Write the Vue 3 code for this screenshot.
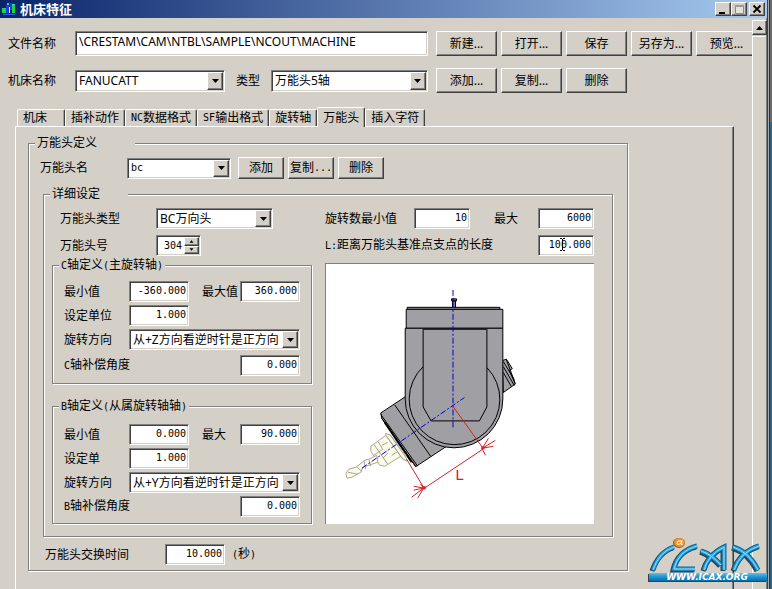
<script setup>
import { ref, reactive } from 'vue'

const fileName = ref('\\CRESTAM\\CAM\\NTBL\\SAMPLE\\NCOUT\\MACHINE')
const fileActions = ['新建...', '打开...', '保存', '另存为...', '预览...']
const machineActions = ['添加...', '复制...', '删除']

const tabs = [
  { latin: '', text: '机床' },
  { latin: '', text: '插补动作' },
  { latin: 'NC', text: '数据格式' },
  { latin: 'SF', text: '输出格式' },
  { latin: '', text: '旋转轴' },
  { latin: '', text: '万能头' },
  { latin: '', text: '插入字符' }
]
const activeTab = ref(5)

const head = reactive({
  number: '304',
  speedMin: '10',
  speedMax: '6000',
  length: '100.000',
  changeTime: '10.000'
})

const axes = reactive([
  {
    id: 'C', title: '轴定义', note: '主旋转轴',
    maxLabel: '最大值', unitLabel: '设定单位',
    min: '-360.000', max: '360.000', unit: '1.000',
    direction: '从+Z方向看逆时针是正方向', offset: '0.000'
  },
  {
    id: 'B', title: '轴定义', note: '从属旋转轴轴',
    maxLabel: '最大', unitLabel: '设定单',
    min: '0.000', max: '90.000', unit: '1.000',
    direction: '从+Y方向看逆时针是正方向', offset: '0.000'
  }
])
</script>

<template>
  <div class="desktop">
    <div class="window">
      <header class="titlebar">
        <svg class="app-icon" viewBox="0 0 14 14" aria-hidden="true">
          <path d="M0 6h4v5H0zM10 4h3v7h-3z" fill="#18d838" />
          <path d="M4 3h3v8H4zM8 1h2v7H8z" fill="#2038e8" />
          <path d="M5 1h2v2H5zM10 2h3v2h-3z" fill="#30c8b0" />
          <path d="M7 5h1v6H7z" fill="#e8f0ff" />
          <path d="M1 12.500h12" stroke="#3058f0" />
        </svg>
        <h1>机床特征</h1>
        <div class="caption-buttons">
          <button class="raised" type="button" aria-label="最小化">
            <svg viewBox="0 0 12 10"><path d="M2 8h6v2H2z" /></svg>
          </button>
          <button class="raised" type="button" aria-label="最大化" disabled>
            <svg viewBox="0 0 12 10"><path d="M2.500 1.500h8v8h-8z" fill="#e4e2dc" stroke="#8c8c88" stroke-width="1" /><path d="M2 1h9v2H2z" fill="#9a9a96" /></svg>
          </button>
          <button class="raised close" type="button" aria-label="关闭">
            <svg viewBox="0 0 12 10"><path d="M2.500 1.500l7 7M9.500 1.500l-7 7" stroke="#000" stroke-width="1.800" /></svg>
          </button>
        </div>
      </header>

      <div class="client">
        <main class="content">
          <section class="top-form">
            <div class="top-row">
              <label class="top-label" for="file-name">文件名称</label>
              <input id="file-name" v-model="fileName" class="sunken path" type="text" />
              <div class="actions">
                <button v-for="a in fileActions" :key="a" class="raised" type="button">{{ a }}</button>
              </div>
            </div>
            <div class="top-row">
              <label class="top-label" for="machine-name">机床名称</label>
              <div class="top-fields">
                <span class="combo sunken wide">
                  <select id="machine-name"><option>FANUCATT</option></select>
                  <span class="arrow raised"><svg viewBox="0 0 7 4"><path d="M0 0h7L3.500 4z" /></svg></span>
                </span>
                <label for="machine-type">类型</label>
                <span class="combo sunken kind">
                  <select id="machine-type"><option>万能头5轴</option></select>
                  <span class="arrow raised"><svg viewBox="0 0 7 4"><path d="M0 0h7L3.500 4z" /></svg></span>
                </span>
              </div>
              <div class="actions">
                <button v-for="a in machineActions" :key="a" class="raised" type="button">{{ a }}</button>
              </div>
            </div>
          </section>

          <div class="tabs" role="tablist">
            <button
              v-for="(t, i) in tabs" :key="t.text" type="button" role="tab"
              :aria-selected="i === activeTab" :class="['tab', { active: i === activeTab }]"
              @click="activeTab = i"
            ><span v-if="t.latin" class="latin">{{ t.latin }}</span>{{ t.text }}</button>
          </div>

          <section class="panel" role="tabpanel">
            <fieldset class="group outer">
              <legend class="legend-long">万能头定义</legend>
              <div class="head-row">
                <label for="head-name">万能头名</label>
                <span class="combo sunken head-name">
                  <select id="head-name" class="mono"><option>bc</option></select>
                  <span class="arrow raised"><svg viewBox="0 0 7 4"><path d="M0 0h7L3.500 4z" /></svg></span>
                </span>
                <div class="actions small">
                  <button class="raised" type="button">添加</button>
                  <button class="raised" type="button">复制<span class="latin">...</span></button>
                  <button class="raised" type="button">删除</button>
                </div>
              </div>

              <fieldset class="group inner">
                <legend class="legend-mid">详细设定</legend>
                <div class="columns">
                  <div class="left">
                    <div class="detail-row">
                      <label for="head-type">万能头类型</label>
                      <span class="combo sunken head-type">
                        <select id="head-type"><option>BC万向头</option></select>
                        <span class="arrow raised"><svg viewBox="0 0 7 4"><path d="M0 0h7L3.500 4z" /></svg></span>
                      </span>
                    </div>
                    <div class="detail-row">
                      <label for="head-number">万能头号</label>
                      <span class="spin sunken">
                        <input id="head-number" v-model="head.number" type="text" />
                        <span class="spin-buttons">
                          <button class="raised" type="button" aria-label="增加"><svg viewBox="0 0 5 3"><path d="M1 2.500h3L2.500 .500z" stroke="#000" stroke-width=".500" /></svg></button>
                          <button class="raised" type="button" aria-label="减少"><svg viewBox="0 0 5 3"><path d="M1 .500h3L2.500 2.500z" stroke="#000" stroke-width=".500" /></svg></button>
                        </span>
                      </span>
                    </div>

                    <fieldset v-for="a in axes" :key="a.id" :class="['group', 'axis', 'axis-' + a.id.toLowerCase()]">
                      <legend><span class="latin">{{ a.id }}</span>{{ a.title }}<span class="latin">(</span>{{ a.note }}<span class="latin">)</span></legend>
                      <div class="axis-grid">
                        <label :for="a.id + '-min'">最小值</label>
                        <input :id="a.id + '-min'" v-model="a.min" class="sunken num" type="text" />
                        <label class="max-label" :for="a.id + '-max'">{{ a.maxLabel }}</label>
                        <input :id="a.id + '-max'" v-model="a.max" class="sunken num" type="text" />
                        <label class="first" :for="a.id + '-unit'">{{ a.unitLabel }}</label>
                        <input :id="a.id + '-unit'" v-model="a.unit" class="sunken num" type="text" />
                        <label class="first" :for="a.id + '-dir'">旋转方向</label>
                        <span class="combo sunken direction">
                          <select :id="a.id + '-dir'"><option>{{ a.direction }}</option></select>
                          <span class="arrow raised"><svg viewBox="0 0 7 4"><path d="M0 0h7L3.500 4z" /></svg></span>
                        </span>
                        <label class="first offset-label" :for="a.id + '-offset'"><span class="latin">{{ a.id }}</span>轴补偿角度</label>
                        <input :id="a.id + '-offset'" v-model="a.offset" class="sunken num last" type="text" />
                      </div>
                    </fieldset>
                  </div>

                  <div class="right">
                    <div class="speed-row">
                      <label class="speed-label" for="speed-min">旋转数最小值</label>
                      <input id="speed-min" v-model="head.speedMin" class="sunken num short" type="text" />
                      <label class="speed-max" for="speed-max">最大</label>
                      <input id="speed-max" v-model="head.speedMax" class="sunken num short end" type="text" />
                    </div>
                    <div class="speed-row">
                      <label for="pivot-length"><span class="latin">L:</span>距离万能头基准点支点的长度</label>
                      <span class="caret-field end">
                        <input id="pivot-length" v-model="head.length" class="sunken num short" type="text" />
                        <svg class="ibeam" viewBox="0 0 5 13" aria-hidden="true"><path d="M0 .500h2M3 .500h2M2.500 1v11M0 12.500h2M3 12.500h2" fill="none" stroke="#000" /></svg>
                      </span>
                    </div>

                    <svg class="diagram" viewBox="0 -2 269 261" role="img" aria-label="万向头示意图">
                      <g stroke="#000" fill="#a0a0a4" stroke-width="1">
                        <path d="M80 131L55 147.500L56 153L90 201.500L121 181L140 150z" />
                        <path d="M69 139.500L105 191M55 149L92 201M56 153L90 201" fill="none" />
                        <path d="M59 157L86 197" fill="none" stroke-width="2" />
                        <path d="M177 95L181 93.500L187 103L184 105L190 118.500L178 127z" />
                        <path d="M178 96L189 114M178 101L189 120M181 94L190 118M178 107L186 121" fill="none" />
                        <path d="M126 33h5v2h-5zM127 35h3v7h-3z" fill="#8080a0" />
                        <path d="M81.500 41.500H174.500V43.500H81.500z" />
                        <path d="M80.500 43.500H177.500V62.500H80.500z" />
                        <path d="M79.500 62.500H177.500V133.500A49 49 0 0 1 79.500 133.500z" />
                        <path d="M97.500 101A45.500 45.500 0 1 0 161.500 102" fill="none" />
                        <path d="M97.500 63.500H161.500V141.500L154 155.500H105.500L97.500 141.500z" />
                      </g>
                      <g fill="#fcfae8" stroke="#aaa692" stroke-width="1">
                        <path d="M60 168L65 170L80 190L81 196L75 192L60 174z" />
                        <path d="M45 181L60 170L75 191L59 201L54 200L45 186z" />
                        <path d="M48 179L62 199M52 176L57 184L48 190M62 188L57 193M61 171L78 195M64 169L80 192" fill="none" />
                        <path d="M51 190L43 194L39 195L30 202L23 204L20 208L21 213L26 212L35 207L37 202L52 197z" />
                        <path d="M31 202L36 206M22 207L32 209M43 194L45 201M38 196L40 204M56 180l6-3M66 190l5-3" fill="none" />
                      </g>
                      <g fill="none" stroke="#0000d8" stroke-width="1" stroke-dasharray="6 2 2 2">
                        <path d="M127.500 24V164" />
                        <path d="M36 203L139 132" />
                      </g>
                      <g fill="none" stroke="#d02028" stroke-width="1">
                        <path d="M127.500 141L158 183.500L98 223.500M81 194L99 224" />
                        <path d="M163 173L157 183L170 175M156 183L168 181M157 184L160 190" />
                        <path d="M88 221L98 223L86 232M98 223L92 233M98 223L95 219M98 223L88 225" />
                        <path d="M156 181h3v3h-3zM97 221h3v3h-3z" fill="#d02028" stroke="none" />
                      </g>
                      <text x="130" y="215" class="dimension">L</text>
                    </svg>
                  </div>
                </div>
              </fieldset>

              <div class="time-row">
                <label for="change-time">万能头交换时间</label>
                <input id="change-time" v-model="head.changeTime" class="sunken num" type="text" />
                <span class="unit"><span class="latin">(</span>秒<span class="latin">)</span></span>
              </div>
            </fieldset>
          </section>
        </main>

        <aside class="scrollbar">
          <button class="raised" type="button" aria-label="向上滚动"><svg viewBox="0 0 7 4"><path d="M0 4h7L3.500 0z" /></svg></button>
          <div class="track"></div>
        </aside>
      </div>
    </div>
    <div class="backdrop"></div>

    <svg class="logo" viewBox="0 0 124 50" role="img" aria-label="iCAX">
      <defs>
        <linearGradient id="bar" x1="0" y1="0" x2="0" y2="1">
          <stop offset="0" stop-color="#58c0ee" />
          <stop offset=".500" stop-color="#1c94d0" />
          <stop offset="1" stop-color="#0a6ca8" />
        </linearGradient>
        <g id="mark" fill="none" stroke-linecap="butt" stroke-linejoin="miter">
          <path d="M8 33Q14 15 29 10" />
          <path d="M52 9Q33 14 29 32H50" />
          <path d="M56 14Q66 17 76 28M59 33Q63 18 79 10V33" />
          <path d="M88 10Q104 15 113 33M114 9Q95 15 89 33" />
        </g>
      </defs>
      <g transform="translate(-1 1)"><use href="#mark" stroke="#34424c" stroke-width="5" /></g>
      <use href="#mark" stroke="#0c6096" stroke-width="5" />
      <use href="#mark" stroke="#2ca8e0" stroke-width="3" />
      <use href="#mark" stroke="#8ed8f6" stroke-width="1" />
      <rect x="3" y="37" width="118" height="8" fill="#34424c" />
      <rect x="4" y="36" width="118" height="8" fill="url(#bar)" />
      <ellipse cx="34" cy="6" rx="6" ry="5" fill="#8a5a20" />
      <ellipse cx="34.500" cy="5.500" rx="5.500" ry="4.500" fill="#f09028" />
      <path d="M36 4Q32 3 32 6T36 6L37 3.500L36 7.500L38 7" fill="none" stroke="#fff" />
      <text x="62" y="43" class="site">WWW.ICAX.ORG</text>
    </svg>
  </div>
</template>

<style>
body {
  background: #d4d0c8;
}
</style>

<style scoped>
.desktop {
  position: relative;
  display: flex;
  height: 100vh;
  overflow: hidden;
  background: #d4d0c8;
  color: #000;
  font-family: "Noto Sans", "Noto Sans CJK SC", sans-serif;
  font-size: 12px;
  line-height: 16px;
}
.desktop *,
.desktop *::before {
  box-sizing: border-box;
}
button,
input,
select {
  margin: 0;
  padding: 0;
  border: 0;
  border-radius: 0;
  color: inherit;
  font: inherit;
  appearance: none;
  outline: none;
}
button {
  display: flex;
  align-items: center;
  justify-content: center;
  white-space: nowrap;
}
label {
  white-space: nowrap;
}
.latin,
.mono {
  font-family: "DejaVu Sans Mono", monospace;
  font-size: 10px;
}
.raised {
  background: #d4d0c8;
  border: 1px solid;
  border-color: #fff #404040 #404040 #fff;
  box-shadow: inset -1px -1px 0 #808080;
}
.sunken {
  background: #fff;
  border: 1px solid;
  border-color: #808080 #fff #fff #808080;
  box-shadow: inset 1px 1px 0 #404040, inset -1px -1px 0 #d4d0c8;
}

/* Window frame */
.window {
  flex: 1;
  min-width: 0;
  display: flex;
  flex-direction: column;
  border-right: 1px solid #404040;
  box-shadow: inset -1px 0 0 #808080;
}
.backdrop {
  flex: none;
  width: 4px;
  border-left: 1px solid #a8acae;
  background: linear-gradient(#6c6c6a 0, #6c6c6a 122px, #2a6686 122px);
  box-shadow: inset 1px 0 0 #24343c;
}
.titlebar {
  flex: none;
  display: flex;
  align-items: center;
  height: 18px;
  padding: 0 2px;
  background: linear-gradient(90deg, #0a246a, #a6caf0);
}
.app-icon {
  width: 14px;
  height: 14px;
}
h1 {
  margin: 0 auto 0 4px;
  color: #fff;
  font-size: 13px;
  font-weight: 700;
  line-height: 18px;
}
.caption-buttons {
  display: flex;
}
.caption-buttons button {
  width: 16px;
  height: 14px;
}
.caption-buttons svg {
  width: 12px;
  height: 10px;
}
.caption-buttons .close {
  margin-left: 2px;
}
.client {
  flex: 1;
  min-height: 0;
  display: flex;
}
.content {
  flex: 1;
  min-width: 0;
  display: flex;
  flex-direction: column;
  overflow: hidden;
}
.scrollbar {
  flex: none;
  width: 15px;
  display: flex;
  flex-direction: column;
  padding-top: 2px;
}
.scrollbar button {
  flex: none;
  width: 15px;
  height: 15px;
}
.scrollbar svg {
  width: 7px;
  height: 4px;
}
.track {
  flex: 1;
  margin-top: 1px;
  margin-right: 2px;
  border-top: 1px solid #fff;
  border-left: 1px solid #fff;
  background: #d6d2c6;
}

/* File and machine selection */
.top-form {
  display: grid;
  gap: 12px;
  padding: 13px 0 0 8px;
}
.top-row {
  display: flex;
  align-items: center;
  height: 25px;
}
.top-label {
  flex: none;
  width: 67px;
}
.path {
  flex: none;
  width: 353px;
  height: 25px;
  padding: 0 3px 4px;
}
.top-fields {
  flex: none;
  display: flex;
  align-items: center;
  justify-content: space-between;
  width: 353px;
}
.actions {
  display: flex;
  gap: 4px;
  margin-left: 8px;
}
.actions button {
  flex: none;
  width: 61px;
  height: 25px;
}
.combo {
  display: inline-grid;
  height: 21px;
  padding: 1px;
}
.combo select {
  grid-area: 1 / 1;
  min-width: 0;
  width: 100%;
  padding: 0 16px 0 2px;
  background: transparent;
}
.combo .arrow {
  grid-area: 1 / 1;
  justify-self: end;
  display: flex;
  align-items: center;
  justify-content: center;
  width: 16px;
  pointer-events: none;
}
.arrow svg {
  width: 7px;
  height: 4px;
}
.wide {
  width: 150px;
  height: 22px;
}
.kind {
  width: 157px;
  height: 22px;
}

/* Tabs */
.tabs {
  flex: none;
  display: flex;
  align-items: flex-end;
  height: 19px;
  margin: 14px 0 0 17px;
}
.tab {
  justify-content: flex-start;
  flex: none;
  min-width: 48px;
  height: 17px;
  padding: 0 5px;
  background: #d4d0c8;
  border: 1px solid;
  border-color: #fff #404040 transparent #fff;
  border-bottom: 0;
  border-radius: 2px 2px 0 0;
  box-shadow: inset -1px 0 0 #a0a09a;
}
.tab.active {
  z-index: 1;
  height: 20px;
  margin-bottom: -1px;
}
.panel {
  flex: 1;
  margin: 0 18px 0 15px;
  padding: 8px 105px 0 12px;
  border: 1px solid #fff;
  border-right-color: #404040;
  border-bottom: 0;
  box-shadow: inset -1px 0 0 #808080;
}

/* Group boxes */
.group {
  min-width: 0;
  margin: 0;
  padding: 0;
  border: 1px solid #808080;
  box-shadow: 1px 1px 0 #fff, inset 1px 1px 0 #fff;
}
legend {
  height: 16px;
  margin-left: 6px;
  padding: 0 2px;
  background: #d4d0c8;
}
.legend-long {
  width: 100px;
}
.legend-mid {
  width: 78px;
}
.head-row {
  display: flex;
  align-items: center;
  height: 22px;
  margin: 6px 0 7px 11px;
}
.head-row label {
  width: 87px;
}
.head-name {
  width: 104px;
}
.small {
  margin-left: 7px;
}
.small button {
  width: 46px;
  height: 22px;
}
.inner {
  margin: 0 14px;
}
.columns {
  display: grid;
  grid-template-columns: 260px 1fr;
  gap: 13px;
  padding: 6px 18px 12px 8px;
}
.detail-row {
  display: flex;
  align-items: center;
  height: 21px;
  padding-left: 8px;
}
.detail-row + .detail-row {
  margin-top: 6px;
}
.detail-row label {
  width: 96px;
}
.head-type {
  width: 117px;
}
.spin {
  display: flex;
  width: 45px;
  height: 21px;
  padding: 1px;
}
.spin input {
  flex: 1;
  min-width: 0;
  padding-right: 2px;
  background: transparent;
  text-align: right;
  font-family: "DejaVu Sans Mono", monospace;
  font-size: 10px;
}
.spin-buttons {
  flex: none;
  display: grid;
  width: 15px;
}
.spin-buttons svg {
  width: 5px;
  height: 3px;
}
.num {
  min-width: 0;
  width: 60px;
  height: 21px;
  padding: 0 2px 3px;
  font-family: "DejaVu Sans Mono", monospace;
  font-size: 10px;
  text-align: right;
}
.num.short {
  width: 56px;
}
.axis-c {
  margin-top: 1px;
}
.axis-b {
  margin-top: 14px;
}
.axis-grid {
  display: grid;
  grid-template-columns: 65px 60px 13px 38px 60px;
  align-items: center;
  row-gap: 3px;
  padding: 8px 0 7px 11px;
}
.axis-c .last,
.axis-c .offset-label {
  margin-top: 2px;
}
.axis-b .axis-grid {
  padding: 10px 0 6px 11px;
}
.first {
  grid-column: 1;
}
.max-label {
  grid-column: 4;
}
.direction {
  grid-column: 2 / 6;
}
.last {
  grid-column: 5;
}
.right {
  display: flex;
  flex-direction: column;
  gap: 6px;
}
.speed-row {
  display: flex;
  align-items: center;
  height: 21px;
}
.speed-label {
  width: 89px;
}
.speed-max {
  margin-left: 24px;
}
.end {
  margin-left: auto;
}
.caret-field {
  position: relative;
  display: flex;
}
.ibeam {
  position: absolute;
  left: 22px;
  top: 3px;
  width: 5px;
  height: 13px;
}
.diagram {
  display: block;
  width: 100%;
  margin-top: 1px;
  background: #fff;
  border-top: 1px solid #808080;
  border-left: 1px solid #808080;
}
.dimension {
  fill: #d02028;
  font-family: "Liberation Sans", sans-serif;
  font-size: 15px;
}
.time-row {
  display: flex;
  align-items: center;
  height: 21px;
  margin: 7px 0 5px 16px;
}
.time-row label {
  width: 120px;
}
.unit {
  margin-left: 7px;
}

/* Site mark over the lower right corner */
.logo {
  position: absolute;
  right: 3px;
  bottom: 2px;
  width: 124px;
  height: 50px;
}
.site {
  fill: #fff;
  font-family: "DejaVu Sans", sans-serif;
  font-size: 9px;
  font-style: italic;
  font-weight: 700;
  text-anchor: middle;
}
</style>
